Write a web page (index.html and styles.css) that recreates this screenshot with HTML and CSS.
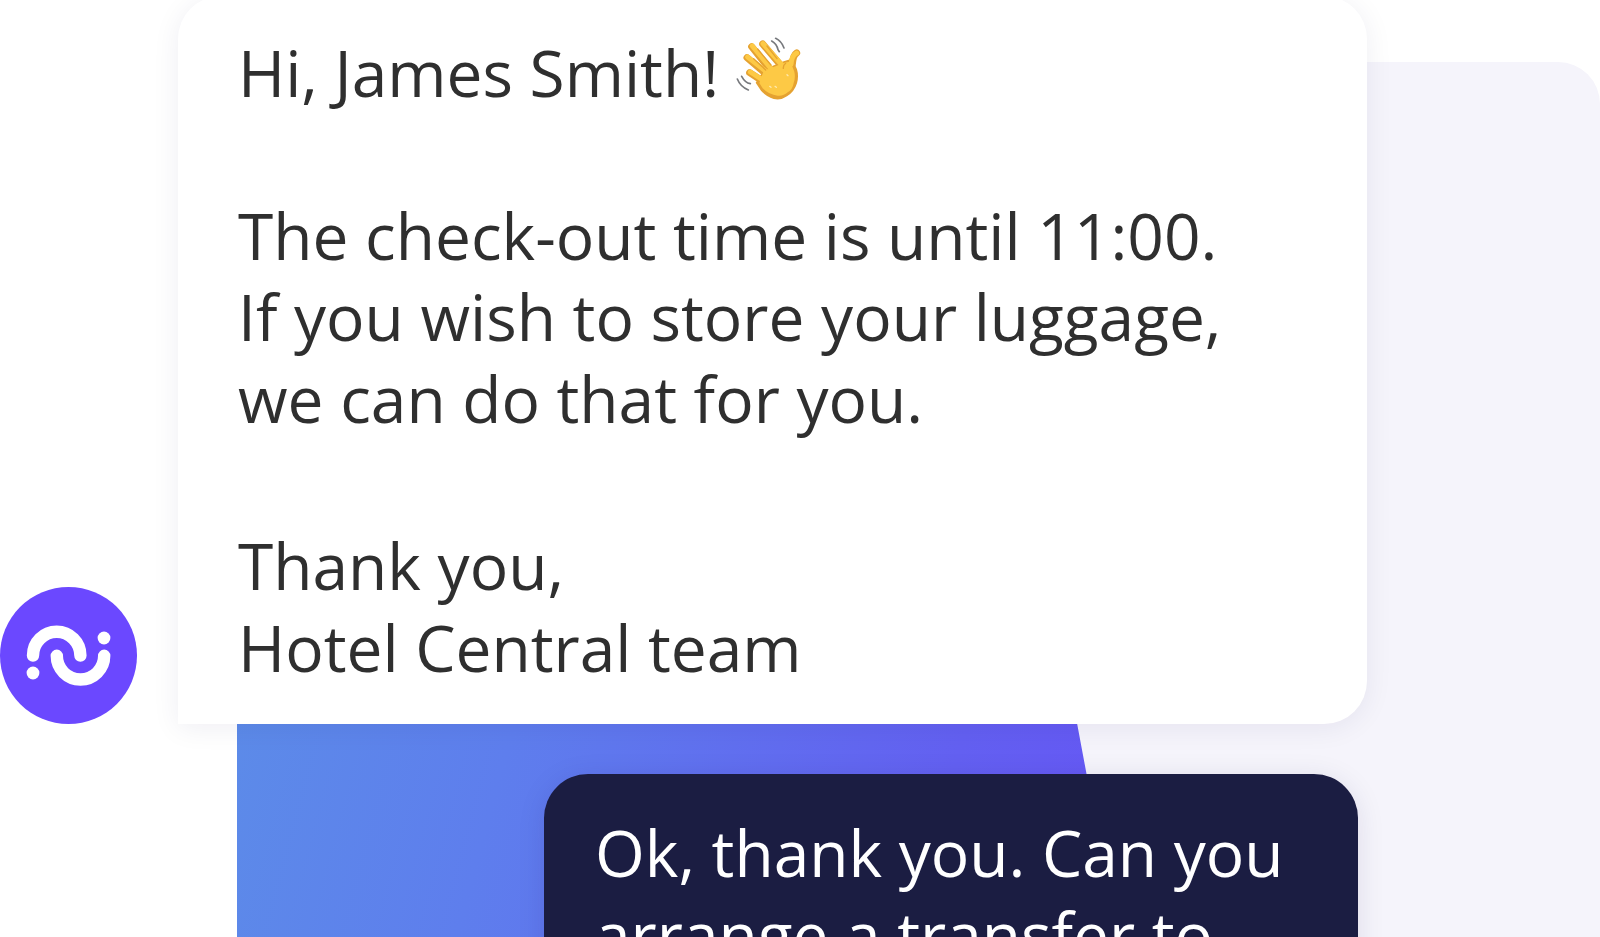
FILE: index.html
```html
<!DOCTYPE html>
<html lang="en">

<head>
    <meta charset="utf-8" />
    <title>Hotel Chat</title>
    <link rel="stylesheet" href="styles.css">
</head>

<body>
    <div class="chat">
        <div class="panel">
            <div class="shape"></div>
        </div>
        <div class="row row-hotel">
            <svg class="avatar" viewBox="0 0 137 137">
                <circle cx="68.5" cy="68.5" r="68.5" fill="#6b48ff" />
                <g fill="none" stroke="#fff" stroke-width="12.4" stroke-linecap="round">
                    <path d="M33 68.5a23.7 23.7 0 0 1 47.4 0" />
                    <path d="M56.8 68.8a23.7 23.7 0 0 0 47.4 0" />
                </g>
                <circle cx="104" cy="51" r="6.4" fill="#fff" />
                <circle cx="33" cy="86" r="6.4" fill="#fff" />
            </svg>
            <div class="bubble bubble-hotel">
                <p class="line-hi">Hi, James Smith!
                    <svg class="wave" viewBox="45 50 201 195">
                        <!-- shaded side of the hand -->
                        <g fill="none" stroke="#e5a231" stroke-width="21" stroke-linecap="round">
                            <path d="M125 74L178 136M92 82L148 152M78 115L138 166M86 160L135 192" />
                            <path d="M227 101Q216 108 214 135" />
                        </g>
                        <path fill="#e5a231" d="M130 150L188 126l24-8q10 16 16 32 6 20 0 42-8 26-30 39-18 13-40 8-22-6-38-25l-16-24z" />
                        <!-- lit side of the hand -->
                        <g fill="none" stroke="#fdc945" stroke-width="15" stroke-linecap="round">
                            <path d="M126 73L180 134M94 80L152 150M80 113L142 162M88 158L138 190" />
                            <path d="M227 101Q212 108 210 135" />
                        </g>
                        <path fill="#fdc945" d="M128 155L190 130l16-3q10 16 14 30 4 18-2 34-3 20-18 28-13 12-30 10-26-2-45-22l-10-16z" />
                        <path fill="none" stroke="#e5a231" stroke-width="4" stroke-linecap="round" d="M110 89l40 48M98 118l36 34M138 80l30 38M194 132q-8 6-7 15" />
                        <path fill="none" stroke="#ffe9ae" stroke-width="4" stroke-linecap="round" d="M146 201l4 3M162 201l4 3M198 166l3 3" />
                        <path fill="none" stroke="#77797d" stroke-width="5" stroke-linecap="round" d="M164 57q17 8 25 29M152 65q15 8 19 26l4 6M62 171q10 19 26 22M49 179q9 23 33 33" />
                    </svg>
                </p>
                <p class="line-info">The check-out time is until 11:00.<br>
                    If you wish to store your luggage,<br>
                    we can do that for you.</p>
                <p>Thank you,<br>
                    Hotel Central team</p>
            </div>
        </div>
        <div class="row row-guest">
            <div class="bubble bubble-guest">
                <p>Ok, thank you. Can you<br>
                    arrange a transfer to</p>
            </div>
        </div>
    </div>
</body>

</html>
```
FILE: styles.css
```css
body {
    margin: 0;
    overflow: hidden;
    background-color: #fff;
    font-family: "Open Sans", "Noto Sans", sans-serif;
}

p {
    margin: 0;
}

.chat {
    position: relative;
    box-sizing: border-box;
    width: 1600px;
    height: 937px;
    overflow: hidden;
}

/* backdrop behind the messages */
.panel {
    position: absolute;
    top: 62px;
    left: 237px;
    right: 0;
    bottom: 0;
    overflow: hidden;
    background-color: #f5f4fb;
    border-top-right-radius: 42px;
}

.shape {
    width: 900px;
    height: 875px;
    background: linear-gradient(105deg, #5c8ce8 13%, #5e7eed 40%, #6360f1 80%, #6655f6 100%);
    clip-path: polygon(0 0, 717px 0, 840px 661px, 880px 875px, 0 875px);
}

.row {
    position: relative;
    display: flex;
}

.row-hotel {
    align-items: flex-end;
    gap: 41px;
    margin-top: -4px;
}

.avatar {
    width: 137px;
    height: 137px;
}

.bubble {
    box-sizing: border-box;
    font-size: 64px;
    line-height: 81.6px;
    white-space: nowrap;
}

.bubble-hotel {
    width: 1189px;
    height: 728px;
    padding: 36px 60px 0;
    color: #2f2f2f;
    background-color: #fff;
    border-radius: 43px 43px 43px 0;
    box-shadow: 0 4px 28px rgba(30, 20, 80, 0.07);
}

.line-hi {
    margin-bottom: 81px;
}

.line-info {
    margin-bottom: 86px;
}

.wave {
    width: 67px;
    height: 65px;
    vertical-align: -4px;
}

.row-guest {
    justify-content: flex-end;
    margin-top: 50px;
    padding-right: 242px;
}

.bubble-guest {
    width: 814px;
    height: 260px;
    padding: 38px 51px 0;
    color: #fff;
    background-color: #1b1d42;
    border-radius: 44px;
    box-shadow: 0 4px 28px rgba(30, 20, 80, 0.1);
}
```
